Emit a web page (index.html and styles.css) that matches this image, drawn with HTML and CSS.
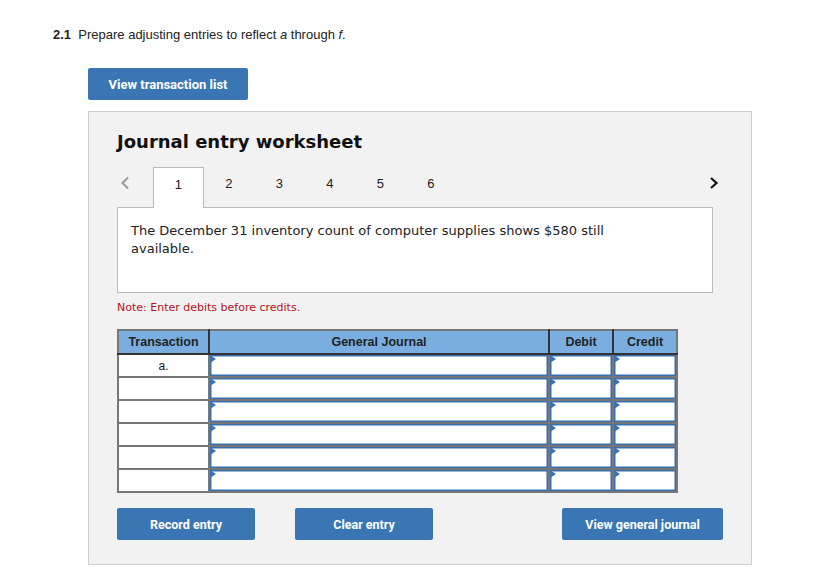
FILE: index.html
```html
<!DOCTYPE html>
<html>
<head>
<meta charset="utf-8">
<link rel="stylesheet" href="styles.css">
</head>
<body>
<div class="page">
  <p class="question"><b>2.1</b>&nbsp; Prepare adjusting entries to reflect <i>a</i> through <i>f</i>.</p>
  <button class="btn btn-list">View transaction list</button>
  <div class="panel">
    <h2 class="title">Journal entry worksheet</h2>
    <div class="tabs">
      <span class="arrow arrow-prev"><svg width="10" height="14" viewBox="0 0 10 14"><path d="M8 1.5 L2.5 7 L8 12.5" fill="none" stroke="#9a9a9a" stroke-width="2"/></svg></span>
      <span class="tab active">1</span>
      <span class="tab">2</span>
      <span class="tab">3</span>
      <span class="tab">4</span>
      <span class="tab">5</span>
      <span class="tab">6</span>
      <span class="spacer"></span>
      <span class="arrow arrow-next"><svg width="10" height="14" viewBox="0 0 10 14"><path d="M2 2 L7.5 7 L2 12" fill="none" stroke="#111" stroke-width="2.2"/></svg></span>
    </div>
    <div class="desc">The December 31 inventory count of computer supplies shows $580 still available.</div>
    <p class="note">Note: Enter debits before credits.</p>
    <table class="journal">
      <thead>
        <tr><th class="c-tr">Transaction</th><th class="c-gj">General Journal</th><th class="c-dr">Debit</th><th class="c-cr">Credit</th></tr>
      </thead>
      <tbody>
        <tr><td class="tr">a.</td><td class="in"><span class="flag"></span></td><td class="in"><span class="flag"></span></td><td class="in"><span class="flag"></span></td></tr>
        <tr><td class="tr"></td><td class="in"><span class="flag"></span></td><td class="in"><span class="flag"></span></td><td class="in"><span class="flag"></span></td></tr>
        <tr><td class="tr"></td><td class="in"><span class="flag"></span></td><td class="in"><span class="flag"></span></td><td class="in"><span class="flag"></span></td></tr>
        <tr><td class="tr"></td><td class="in"><span class="flag"></span></td><td class="in"><span class="flag"></span></td><td class="in"><span class="flag"></span></td></tr>
        <tr><td class="tr"></td><td class="in"><span class="flag"></span></td><td class="in"><span class="flag"></span></td><td class="in"><span class="flag"></span></td></tr>
        <tr><td class="tr"></td><td class="in"><span class="flag"></span></td><td class="in"><span class="flag"></span></td><td class="in"><span class="flag"></span></td></tr>
      </tbody>
    </table>
    <div class="actions">
      <button class="btn btn-record">Record entry</button>
      <button class="btn btn-clear">Clear entry</button>
      <span class="spacer"></span>
      <button class="btn btn-view">View general journal</button>
    </div>
  </div>
</div>
</body>
</html>
```

FILE: styles.css
```css
html, body {
  margin: 0;
  padding: 0;
  background: #ffffff;
}
.page {
  padding: 27px 0 0 53px;
  font-family: "Liberation Sans", Arial, sans-serif;
  color: #222;
}
.question {
  margin: 0;
  font-size: 13px;
  line-height: 16px;
  color: #222;
}
.btn {
  display: inline-flex;
  align-items: center;
  justify-content: center;
  height: 32px;
  border: none;
  border-radius: 2px;
  background: #3b76b4;
  color: #ffffff;
  font-family: Roboto, "Liberation Sans", sans-serif;
  font-weight: 700;
  font-size: 12.5px;
  padding: 0;
  cursor: pointer;
}
.btn-list {
  margin: 25px 0 0 35px;
  width: 160px;
  font-size: 13px;
}
.panel {
  margin: 11px 0 0 35px;
  width: 664px;
  height: 454px;
  background: #f2f2f2;
  border: 1px solid #cccccc;
  padding: 19px 0 0 28px;
  box-sizing: border-box;
  display: flex;
  flex-direction: column;
}
.title {
  margin: 0;
  font-family: "DejaVu Sans", Verdana, sans-serif;
  font-weight: 700;
  font-size: 18px;
  line-height: 22px;
  color: #111;
}
.tabs {
  margin-top: 14px;
  width: 604px;
  height: 40px;
  display: flex;
  align-items: flex-start;
  position: relative;
  z-index: 1;
}
.arrow {
  display: flex;
  align-items: center;
  justify-content: center;
  height: 32px;
}
.arrow-prev {
  width: 16px;
  margin-right: 20px;
}
.arrow-next {
  width: 14px;
}
.tab {
  width: 50.5px;
  height: 33px;
  display: flex;
  align-items: center;
  justify-content: center;
  box-sizing: border-box;
  font-size: 13px;
  color: #222;
}
.tab.active {
  background: #ffffff;
  border: 1px solid #bbbbbb;
  border-bottom: none;
  height: 41px;
  padding-bottom: 8px;
}
.spacer {
  flex: 1;
}
.desc {
  width: 596px;
  height: 86px;
  box-sizing: border-box;
  background: #ffffff;
  border: 1px solid #bbbbbb;
  padding: 14px 100px 14px 13px;
  font-family: "DejaVu Sans", Verdana, sans-serif;
  font-size: 13px;
  line-height: 18px;
  color: #222;
}
.note {
  margin: 8px 0 0 0;
  font-family: "DejaVu Sans", Verdana, sans-serif;
  font-size: 11px;
  line-height: 14px;
  color: #b5121b;
}
.journal {
  margin-top: 14px;
  width: 559px;
  border-collapse: collapse;
  table-layout: fixed;
  border: 2px solid #777777;
}
.journal th {
  height: 24px;
  box-sizing: border-box;
  background: #7aaee0;
  font-size: 12.5px;
  font-weight: 700;
  color: #222;
  padding: 0;
  border-left: 2px solid #333;
  border-bottom: 2px solid #333;
  text-align: center;
}
.journal th.c-tr { width: 91px; border-left: 2px solid #777; }
.journal th.c-gj { width: 340px; }
.journal th.c-dr { width: 64px; }
.journal th.c-cr { width: 64px; }
.journal td {
  height: 23px;
  box-sizing: border-box;
  padding: 0;
  background: #ffffff;
}
.journal td.tr {
  border: 2px solid #777777;
  text-align: center;
  font-size: 12px;
  color: #222;
}
.journal td.in {
  position: relative;
  border: 2px solid #777777;
  box-shadow: inset 0 0 0 1.5px #3a6fae;
}
.flag {
  position: absolute;
  left: 0;
  top: 0;
  width: 0;
  height: 0;
  border-top: 4px solid transparent;
  border-bottom: 4px solid transparent;
  border-left: 6px solid #3a72b6;
}
.actions {
  margin-top: 15px;
  width: 606px;
  display: flex;
}
.btn-record {
  width: 138px;
}
.btn-clear {
  width: 138px;
  margin-left: 40px;
}
.btn-view {
  width: 161px;
}
```
